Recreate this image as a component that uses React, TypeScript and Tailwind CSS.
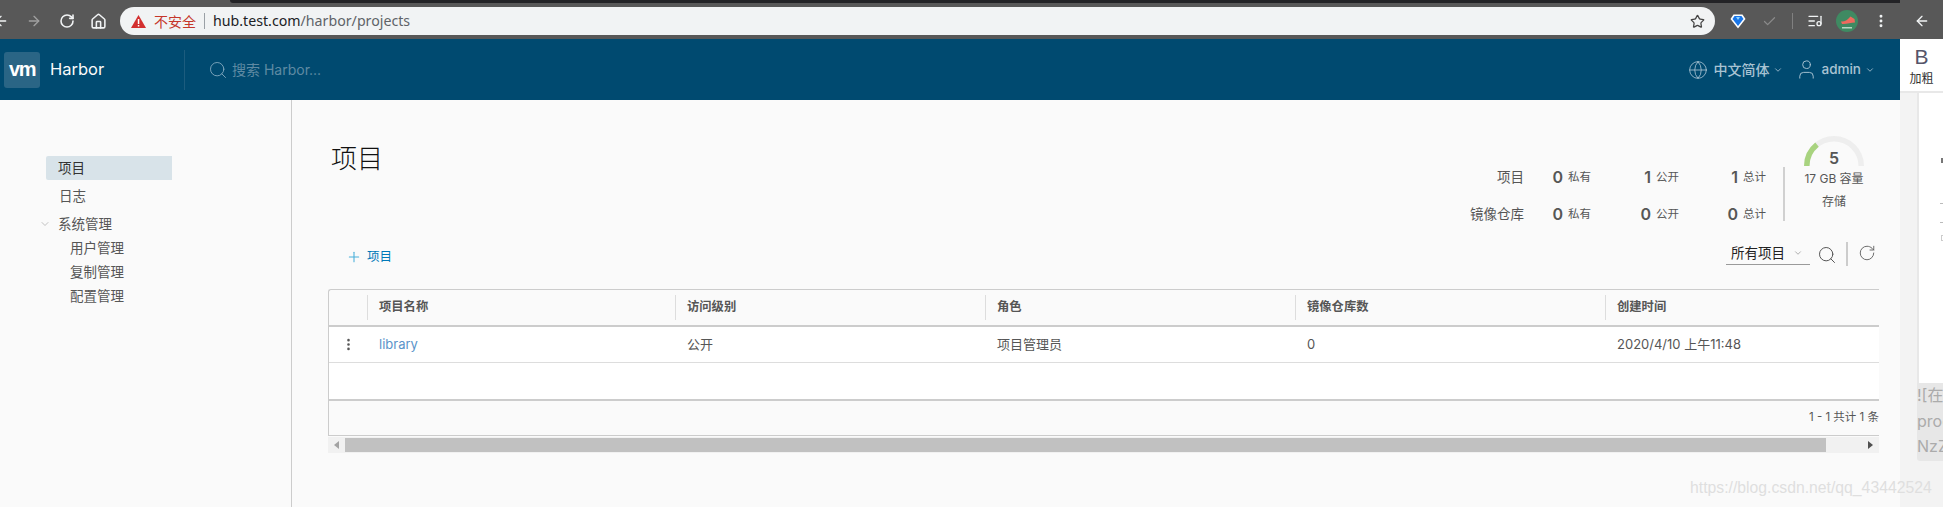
import React from 'react';
import { ArrowLeft, ArrowRight, Check, ChevronDown, Globe, Home, ListMusic, MoreVertical, Plus, RotateCw, Search, Star, User } from 'lucide-react';

const navSub = ['用户管理', '复制管理', '配置管理'];

const stats = [
  { label: '项目', values: [['0', '私有'], ['1', '公开'], ['1', '总计']] },
  { label: '镜像仓库', values: [['0', '私有'], ['0', '公开'], ['0', '总计']] },
];

const columns = ['项目名称', '访问级别', '角色', '镜像仓库数', '创建时间'];
const row = ['library', '公开', '项目管理员', '0', '2020/4/10 上午11:48'];

const GRID = 'grid grid-cols-[38px_308px_310px_310px_310px_274px]';

const BrowserBar = () => (
  <div className="h-[39px] bg-[#585858] flex flex-col shrink-0">
    <div className="ml-[230px] w-[1670px] h-[3px] bg-[#232326] rounded-bl-[4px]" />
    <div className="h-[36px] flex items-center text-[#f1f3f4]">
      <ArrowLeft className="w-4 h-4 -ml-[7px] shrink-0" strokeWidth={2} />
      <ArrowRight className="w-4 h-4 ml-[17px] shrink-0 text-[#a0a0a0]" strokeWidth={2} />
      <RotateCw className="w-4 h-4 ml-[17px] shrink-0" strokeWidth={2.4} />
      <Home className="w-[17px] h-[17px] ml-[15px] shrink-0" strokeWidth={2.2} />
      <div className="ml-[13px] w-[1595px] h-[28px] bg-[#f1f3f4] rounded-full flex items-center pl-[11px] pr-[10px] shrink-0">
        <svg width="15" height="13" viewBox="0 0 15 13">
          <path d="M7.5 0 15 13H0z" fill="#d32f2f" />
          <rect x="6.8" y="4" width="1.5" height="5" fill="#fff" />
          <rect x="6.8" y="10" width="1.5" height="1.5" fill="#fff" />
        </svg>
        <span className="ml-2 text-[14px] text-[#c5362b]">不安全</span>
        <div className="ml-2 w-px h-[16px] bg-[#9aa0a6]" />
        <span className="ml-[8px] text-[14.2px] text-[#5f6368] font-['Noto_Sans',sans-serif]">
          <span className="text-[#202124]">hub.test.com</span>/harbor/projects
        </span>
        <Star className="w-[15px] h-[15px] ml-auto text-[#444]" strokeWidth={2} />
      </div>
      <svg className="ml-[15px] shrink-0" width="16" height="15" viewBox="0 0 16 15">
        <path d="M3.5.5h9L15.5 5 8 14.5.5 5z" fill="#fff" />
        <path d="M4.5 2h7L13.5 5 8 12 2.5 5z" fill="#1976e8" />
        <path d="M6 3h4L8 6z" fill="#8cd2ff" />
      </svg>
      <Check className="w-[15px] h-[15px] ml-[16px] shrink-0 text-[#8a8a8a]" strokeWidth={2} />
      <div className="ml-[15px] w-px h-[16px] bg-[#808080] shrink-0" />
      <ListMusic className="w-4 h-4 ml-[14px] shrink-0" strokeWidth={2} />
      <svg className="ml-[13px] shrink-0" width="22" height="22" viewBox="0 0 22 22">
        <circle cx="11" cy="11" r="11" fill="#3f8a62" />
        <path d="M5 11.5c3 .5 6-1 9-4.500l.5-.5 4 2.500.5 3.500c-4 0-9 2-13 1.500z" fill="#ef6a5e" />
        <rect x="6" y="17" width="10" height="1.500" fill="#b5d8c2" />
      </svg>
      <MoreVertical className="w-4 h-4 ml-[15px] shrink-0" strokeWidth={2.4} />
      <ArrowLeft className="w-4 h-4 ml-[25px] shrink-0" strokeWidth={2} />
    </div>
  </div>
);

const AppHeader = () => (
  <header className="h-[61px] bg-[#004a70] flex items-center shrink-0 pl-[4px] pr-[25px]">
    <div className="w-9 h-9 rounded-[3px] bg-[#2a6585] flex items-center justify-center text-white font-bold text-[20px] tracking-[-1.5px] font-['Liberation_Sans',sans-serif] pb-[2px]">
      vm
    </div>
    <span className="ml-[10px] w-[52px] text-[16.5px] text-[#fafafa] whitespace-nowrap">Harbor</span>
    <div className="ml-[82px] w-px h-[40px] bg-[#1c5c7e]" />
    <Search className="ml-[23px] w-[20px] h-[20px] text-[#8fb2c6]" strokeWidth={1} />
    <span className="ml-[4px] text-[14px] text-[#5f8aa3]">搜索 Harbor...</span>
    <Globe className="ml-auto w-5 h-5 text-[#a9c3d3]" strokeWidth={1} />
    <span className="ml-[5px] text-[14px] font-medium text-[#a9c3d3]">中文简体</span>
    <ChevronDown className="ml-[4px] w-[10px] h-[10px] text-[#a9c3d3]" />
    <User className="ml-[12px] w-[23px] h-[23px] text-[#a9c3d3]" strokeWidth={1} />
    <span className="ml-[3px] text-[13.5px] font-medium text-[#a9c3d3]">admin</span>
    <ChevronDown className="ml-[4px] w-[10px] h-[10px] text-[#a9c3d3]" />
  </header>
);

const Sidebar = () => (
  <aside className="w-[292px] border-r border-[#ccc] pt-[56px] text-[13.5px] text-[#565656] shrink-0">
    <div className="ml-[46px] w-[126px] h-[24px] bg-[#d8e3e9] rounded-l-[2px] pl-[12px] leading-[24px] text-[#333]">项目</div>
    <div className="mt-[2px] ml-[59px] h-[28px] leading-[28px]">日志</div>
    <div className="flex items-center h-[28px]">
      <ChevronDown className="ml-[39px] w-[12px] h-[12px] text-[#a8a8a8]" strokeWidth={1.4} />
      <span className="ml-[7px]">系统管理</span>
    </div>
    <div className="-mt-[2px]">
      {navSub.map(n => (
        <div key={n} className="ml-[70px] h-[24px] leading-[24px]">{n}</div>
      ))}
    </div>
  </aside>
);

const Stats = () => (
  <div className="flex mt-[36px] mr-[10px]">
    <div className="mt-[23px] grid grid-cols-[64px_67px_88px_87px] auto-rows-[37px] items-center text-[#565656]">
      {stats.map(s => (
        <React.Fragment key={s.label}>
          <span className="text-right text-[13.5px] leading-none">{s.label}</span>
          {s.values.map(([num, text], i) => (
            <span key={i} className="flex items-center justify-end">
              <span className="text-[16px] font-semibold leading-none -mt-[2px]">{num}</span>
              <span className="ml-[5px] text-[11.5px] leading-none">{text}</span>
            </span>
          ))}
        </React.Fragment>
      ))}
    </div>
    <div className="mt-[31px] ml-[17px] w-[2px] h-[54px] bg-[#d0d0d0]" />
    <div className="ml-[14px] w-[70px] flex flex-col items-center relative text-[#565656]">
      <svg width="60" height="30" viewBox="0 0 60 30">
        <path d="M2.750 30a27.250 27.250 0 0 1 54.500 0" fill="none" stroke="#eeeeee" strokeWidth="5.500" />
        <path d="M2.750 30A27.250 27.250 0 0 1 13 8.700" fill="none" stroke="#a8d37f" strokeWidth="5.500" />
      </svg>
      <span className="absolute top-[12px] text-[16px] font-semibold leading-5">5</span>
      <span className="h-[26px] leading-[26px] text-[12px] whitespace-nowrap">17 GB 容量</span>
      <span className="h-[20px] leading-[20px] text-[12px]">存储</span>
    </div>
  </div>
);

const DataTable = () => (
  <div className="text-[13px] text-[#565656]">
    <div className="border-t border-l border-[#ccc] rounded-tl-[3px] bg-[#fafafa]">
      <div className={`${GRID} h-[37px] border-b-2 border-[#ccc]`}>
        <div />
        {columns.map(c => (
          <div key={c} className="h-[35px] flex items-center">
            <div className="w-px h-[25px] bg-[#ddd] shrink-0" />
            <span className="ml-[11px] text-[12.3px] font-semibold">{c}</span>
          </div>
        ))}
      </div>
      <div className={`${GRID} h-[36px] border-b border-[#ddd] bg-white`}>
        <div className="h-[35px] flex items-center justify-center pl-[1px]">
          <MoreVertical className="w-[15px] h-[15px] text-[#565656]" strokeWidth={2.2} />
        </div>
        {row.map((c, i) => (
          <div key={c} className={`h-[35px] leading-[35px] pl-[12px] whitespace-nowrap ${i === 0 ? 'text-[#5a93c9]' : ''}`}>{c}</div>
        ))}
      </div>
      <div className="h-[38px] border-b-2 border-[#ccc] bg-white" />
      <div className="h-[35px] border-b border-[#ccc] flex items-center justify-end overflow-hidden">
        <span className="text-[11.5px] whitespace-nowrap">1 - 1 共计 1 条</span>
      </div>
    </div>
    <div className="mt-px h-[16px] bg-[#f1f1f1] flex items-center">
      <svg className="ml-[6px]" width="5" height="8" viewBox="0 0 5 8"><path d="M5 0v8L0 4z" fill="#a3a3a3" /></svg>
      <div className="ml-[6px] w-[481px] grow h-[14px] bg-[#c1c1c1]" />
      <div className="w-[53px] flex justify-end pr-[6px]">
        <svg width="5" height="8" viewBox="0 0 5 8"><path d="M0 0v8l5-4z" fill="#505050" /></svg>
      </div>
    </div>
  </div>
);

const Content = () => (
  <main className="flex-1 bg-[#fafafa] pl-[36px] pr-[21px]">
    <div className="h-[134px] flex justify-between">
      <h1 className="ml-[3px] mt-[41px] text-[26px] leading-[36px] font-light text-[#111]">项目</h1>
      <Stats />
    </div>
    <div className="h-[55px] flex">
      <div className="mt-[14px] ml-[18px] h-[18px] flex items-center text-[#0079b8] text-[12.5px]">
        <Plus className="w-[16px] h-[16px] text-[#49afd9]" strokeWidth={1.6} />
        <span className="ml-[5px]">项目</span>
      </div>
      <div className="ml-auto mr-[3px] h-[32px] flex items-start">
        <div className="mt-[8px] w-[84px] h-[23px] border-b border-[#9a9a9a] pl-[5px] flex items-center text-[13.5px] text-[#222]">
          所有项目
          <ChevronDown className="ml-[8px] w-[10px] h-[10px] text-[#a0a0a0]" />
        </div>
        <Search className="mt-[11px] ml-[7px] w-[20px] h-[20px] text-[#565656]" strokeWidth={1.2} />
        <div className="mt-[8px] ml-[9px] w-[2px] h-[24px] bg-[#ccc]" />
        <RotateCw className="mt-[10px] ml-[10px] w-[18px] h-[18px] text-[#5c5c5c]" strokeWidth={1.2} />
      </div>
    </div>
    <DataTable />
  </main>
);

const EditorEdge = () => (
  <div className="w-[43px] flex flex-col bg-[#f3f3f3] overflow-hidden">
    <div className="h-[54px] bg-white border-b-2 border-[#e8e8e8] flex flex-col items-center pt-[5px]">
      <span className="text-[21px] leading-[26px] text-[#55556a] font-['Liberation_Sans',sans-serif]">B</span>
      <span className="text-[12px] leading-[18px] text-[#333]">加粗</span>
    </div>
    <div className="ml-[17px] h-[290px] bg-white border-l-2 border-[#e8e8e8] flex flex-col items-end pt-[65px]">
      <div className="w-[2px] h-[5px] bg-[#777]" />
      <div className="mt-[40px] w-[3px] h-px bg-[#bbb]" />
      <div className="mt-[18px] w-[3px] h-px bg-[#bbb]" />
      <div className="mt-[12px] w-[2px] h-[6px] border border-r-0 border-[#ccc]" />
    </div>
    <div className="ml-[17px] h-[78px] bg-[#e7e7e7] rounded-bl-[3px] text-[16px] leading-[25.5px] text-[#ababab] whitespace-nowrap overflow-hidden">
      <div>![在</div>
      <div>proc</div>
      <div>NzZ</div>
    </div>
  </div>
);

export default function App() {
  return (
    <div className="relative w-[1943px] h-[507px] overflow-hidden bg-[#f3f3f3] flex flex-col font-[Inter,'Noto_Sans_CJK_SC',sans-serif]">
      <BrowserBar />
      <div className="flex-1 flex min-h-0">
        <div className="w-[1900px] flex flex-col">
          <AppHeader />
          <div className="flex-1 flex bg-[#fafafa]">
            <Sidebar />
            <Content />
          </div>
        </div>
        <EditorEdge />
      </div>
      <span className="absolute left-[1690px] top-[477px] text-[15.75px] leading-[22px] text-[#dfdfdf] font-['Liberation_Sans',sans-serif]">
        https://blog.csdn.net/qq_43442524
      </span>
    </div>
  );
}
